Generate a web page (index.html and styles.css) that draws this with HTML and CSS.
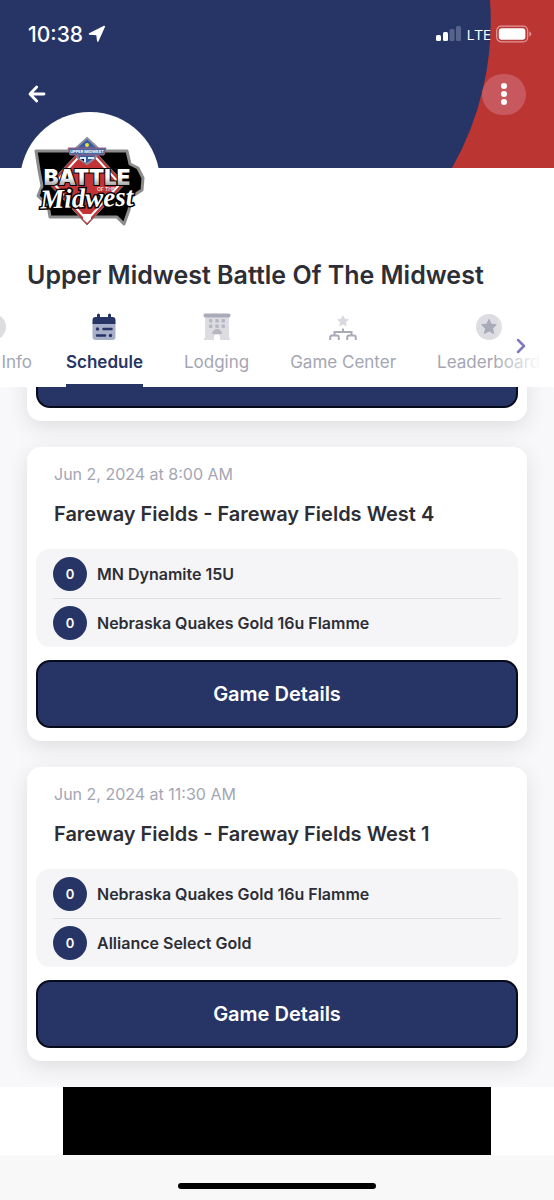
FILE: index.html
```html
<!DOCTYPE html>
<html lang="en">
<head>
<meta charset="utf-8">
<meta name="viewport" content="width=device-width, initial-scale=1">
<title>Upper Midwest Battle Of The Midwest</title>
<link rel="stylesheet" href="styles.css">
</head>
<body>
<div class="app">
  <header class="hero">
    <svg class="hero-art" viewBox="0 0 110 168" preserveAspectRatio="none" aria-hidden="true"><path d="M46 0A297 297 0 0 1 8 168H110V0Z" fill="#bb3532"/></svg>
    <div class="status">
      <div class="status-left"><span class="time">10:38</span>
        <svg width="18" height="18" viewBox="0 0 18 18" aria-hidden="true"><path d="M16.300 1.500 9.800 16 9 9.500 1.500 9Z" fill="#fff" stroke="#fff" stroke-width="1.600" stroke-linejoin="round"/></svg>
      </div>
      <div class="status-right">
        <svg width="26" height="16" viewBox="0 0 26 16" aria-hidden="true"><rect x="0" y="9" width="5" height="6" rx="1.500" fill="#fff"/><rect x="7" y="6" width="5" height="9" rx="1.500" fill="#fff"/><rect x="13.500" y="3" width="5" height="12" rx="1.500" fill="#58638b"/><rect x="20" y="0" width="5" height="15" rx="1.500" fill="#58638b"/></svg>
        <span class="network">LTE</span>
        <svg width="36" height="18" viewBox="0 0 36 18" aria-hidden="true"><rect x=".7" y="1.200" width="31" height="15.600" rx="4.500" fill="none" stroke="#dd9a99" stroke-width="1.200"/><rect x="2.800" y="3.200" width="26.600" height="11.600" rx="2.800" fill="#fff"/><path d="M33.300 6.500q2 .8 2 2.500t-2 2.500Z" fill="#dd9a99"/></svg>
      </div>
    </div>
    <div class="toolbar">
      <button class="back" type="button" aria-label="Back"><svg width="18" height="18" viewBox="0 0 18 18" aria-hidden="true"><path d="M16 9H2.500M8.700 2 2 9l6.700 7" fill="none" stroke="#fff" stroke-width="2.800" stroke-linecap="round" stroke-linejoin="round"/></svg></button>
      <button class="more" type="button" aria-label="More options"><svg width="8" height="24" viewBox="0 0 8 24" aria-hidden="true"><g fill="#fff"><circle cx="4" cy="4" r="3"/><circle cx="4" cy="12" r="3"/><circle cx="4" cy="20" r="3"/></g></svg></button>
    </div>
    <div class="avatar">
      <svg width="112" height="94" viewBox="0 0 112 94" role="img" aria-label="Battle of the Midwest">
        <defs><linearGradient id="steel" x1="0" y1="0" x2="0" y2="1"><stop offset=".5" stop-color="#fff"/><stop offset=".8" stop-color="#aaa"/></linearGradient></defs>
        <path d="M2 15H93L96 28L104 32L109 42L108 54L97 61L95 74L90 88L83 81H16L14 69L4 60L8 50L5 34Z" fill="#000" stroke="#8c8c8c" stroke-width="3" stroke-linejoin="round"/>
        <path d="M53 7 91 48 53 89 15 48Z" fill="#c23335" stroke="#777"/>
        <path d="M53 12 86 48 53 84 20 48Z" fill="none" stroke="#fff" stroke-width="2"/>
        <path d="M53 2 65 13 61 22 53 28 44 22 41 13Z" fill="#355ca7" stroke="#8d8c9e" stroke-width="2"/>
        <path d="M34 12H72L70 19H36Z" fill="#4966a1" stroke="#a6617a"/>
        <text x="53" y="17" class="logo-ribbon" text-anchor="middle">UPPER MIDWEST</text>
        <circle cx="53" cy="9" r="2" fill="#f5dc35"/><path d="M46 22h5v4M54 22h6" stroke="#dfebff" stroke-width="2"/>
        <text x="53" y="49" text-anchor="middle" class="logo-battle">BATTLE</text>
        <text x="53" y="71" text-anchor="middle" class="logo-midwest" transform="rotate(-2 53 71)">Midwest</text>
        <text x="72" y="55" text-anchor="middle" class="logo-small">OF THE</text>
        <path d="M49 78h8v5l-4 4-4-4Z" fill="#fff"/>
      </svg>
    </div>
  </header>

  <h1 class="title">Upper Midwest Battle Of The Midwest</h1>

  <nav class="tabs" aria-label="Event sections">
    <a class="tab tab-info" href="#info"><svg width="28" height="28" viewBox="0 0 28 28" aria-hidden="true"><circle cx="14" cy="14" r="13" fill="#dcdce2"/></svg><span>Info</span></a>
    <a class="tab active" href="#schedule" aria-current="page"><svg width="28" height="28" viewBox="0 0 28 28" aria-hidden="true"><path d="M2.500 10H25.500V24Q25.500 27 22.500 27H5.500Q2.500 27 2.500 24Z" fill="#a8afc8"/><path d="M2.500 11V7q0-3 3-3h17q3 0 3 3v4Z" fill="#273566"/><path d="M8.500 2v4M19.500 2v4" stroke="#273566" stroke-width="3" stroke-linecap="round"/><path d="M13.500 16h8M7 22.500h8" stroke="#273566" stroke-width="2.500" stroke-linecap="round"/><circle cx="7.500" cy="16" r="1.700" fill="#273566"/><circle cx="20.500" cy="22.500" r="1.700" fill="#273566"/></svg><span>Schedule</span></a>
    <a class="tab" href="#lodging"><svg width="28" height="28" viewBox="0 0 28 28" aria-hidden="true"><path d="M2 4H26V25h1v2H17v-2.500a3 3 0 0 0-6 0V27H1v-2h1Z" fill="#dcdce2"/><rect x=".5" y=".5" width="27" height="4" rx="1.800" fill="#a9abb8"/><g fill="#b6b7c3"><rect x="6" y="6" width="3.500" height="3.500" rx=".8"/><rect x="12.300" y="6" width="3.500" height="3.500" rx=".8"/><rect x="18.500" y="6" width="3.500" height="3.500" rx=".8"/><rect x="6" y="11.500" width="3.500" height="3.500" rx=".8"/><rect x="12.300" y="11.500" width="3.500" height="3.500" rx=".8"/><rect x="18.500" y="11.500" width="3.500" height="3.500" rx=".8"/><path d="M9 21a5 5 0 0 1 10 0Z"/></g></svg><span>Lodging</span></a>
    <a class="tab" href="#games"><svg width="28" height="28" viewBox="0 0 28 28" aria-hidden="true"><path d="m14 2 1.900 3.800 4.100.6-3 2.900.7 4.200-3.700-2-3.700 2 .7-4.200-3-2.900 4.100-.6Z" fill="#d8d9e1"/><path d="M14 15.500V19M5.500 22V19h17v3M1.200 27v-2.500q0-2 2-2h4.600q2 0 2 2V27M18.200 27v-2.500q0-2 2-2h4.600q2 0 2 2V27" fill="none" stroke="#a9abb8" stroke-width="2"/></svg><span>Game Center</span></a>
    <a class="tab" href="#leaders"><svg width="28" height="28" viewBox="0 0 28 28" aria-hidden="true"><circle cx="14" cy="14" r="13" fill="#dcdce2"/><path d="m14 6.500 2.200 4.600 5.100.7-3.700 3.500.9 5.100-4.500-2.400-4.500 2.400.9-5.100-3.700-3.500 5.100-.7Z" fill="#a9abb8" stroke="#a9abb8" stroke-linejoin="round"/></svg><span>Leaderboard</span></a>
    <button class="next" type="button" aria-label="More sections"><svg width="10" height="16" viewBox="0 0 10 16" aria-hidden="true"><path d="m2 2 6 6-6 6" fill="none" stroke="#8078bd" stroke-width="2.500" stroke-linecap="round" stroke-linejoin="round"/></svg></button>
  </nav>

  <main class="schedule">
    <article class="card card-previous"><button class="details" type="button" aria-label="Previous game details"></button></article>
    <article class="card">
      <time class="date" datetime="2024-06-02T08:00">Jun 2, 2024 at 8:00 AM</time>
      <h2 class="venue">Fareway Fields - Fareway Fields West 4</h2>
      <ul class="teams">
        <li class="team"><span class="score">0</span><span>MN Dynamite 15U</span></li>
        <li class="team"><span class="score">0</span><span>Nebraska Quakes Gold 16u Flamme</span></li>
      </ul>
      <button class="details" type="button">Game Details</button>
    </article>
    <article class="card">
      <time class="date" datetime="2024-06-02T11:30">Jun 2, 2024 at 11:30 AM</time>
      <h2 class="venue">Fareway Fields - Fareway Fields West 1</h2>
      <ul class="teams">
        <li class="team"><span class="score">0</span><span>Nebraska Quakes Gold 16u Flamme</span></li>
        <li class="team"><span class="score">0</span><span>Alliance Select Gold</span></li>
      </ul>
      <button class="details" type="button">Game Details</button>
    </article>
  </main>
  <aside class="banner" aria-label="Advertisement"><div class="banner-fill"></div></aside>
  <footer class="home"><div class="home-bar"></div></footer>
</div>
</body>
</html>
```
FILE: styles.css
```css
* { box-sizing: border-box; }
body { margin: 0; background: #fff; color: #2d2e36; font-family: Inter, "Liberation Sans", sans-serif; }
button { border: 0; padding: 0; background: none; font: inherit; cursor: pointer; }
svg { display: block; flex: none; }
h1, h2, ul { margin: 0; padding: 0; }
.app { overflow: hidden; }

.hero { position: relative; height: 168px; padding: 20px 22px 0 28px; background: #273566; color: #fff; }
.hero-art { position: absolute; top: 0; right: 0; width: 110px; height: 100%; }
.status { position: relative; display: flex; justify-content: space-between; align-items: center; height: 28px; }
.status-left, .status-right { display: flex; align-items: center; gap: 5px; }
.time { font-size: 21px; font-weight: 500; }
.network { font-family: "Open Sans", sans-serif; font-size: 15px; font-weight: 500; }
.toolbar { position: relative; display: flex; justify-content: space-between; align-items: center; margin-top: 25px; padding-right: 6px; }
.back { padding: 12px 0; }
.more { display: grid; place-items: center; width: 44px; height: 41px; border-radius: 21px; background: #c7585e; }
.avatar { position: absolute; left: 20px; top: 112px; display: flex; justify-content: center; width: 140px; height: 140px; padding-top: 24px; border-radius: 50%; background: #fff; }
.logo-battle { font: 900 22px Inter, sans-serif; fill: url(#steel); stroke: #000; stroke-width: 2px; paint-order: stroke; }
.logo-midwest { font: italic 700 27px "Liberation Serif", serif; fill: #fff; stroke: #000; stroke-width: 3px; paint-order: stroke; }
.logo-small { font: 700 5px Inter, sans-serif; fill: #ddd; }
.logo-ribbon { font: 700 4px Inter, sans-serif; fill: #fff; }

.title { padding: 91px 27px 0; font-size: 25px; line-height: 32px; font-weight: 600; }
.tabs { position: relative; display: flex; gap: 41px; height: 96px; padding-top: 22px; overflow: hidden; }
.tabs::after { content: ""; position: absolute; top: 0; right: 0; width: 60px; height: 100%; background: linear-gradient(to right, transparent, #fff 80%); }
.tab { flex: none; display: flex; flex-direction: column; align-items: center; gap: 9px; color: #a4a6b3; font-size: 17px; line-height: 24px; text-decoration: none; }
.tab-info { width: 78px; margin: 0 -7px 0 -46px; }
.tab-info span { align-self: flex-end; }
.tab.active { color: #273566; font-weight: 600; border-bottom: 3px solid #273566; }
.next { position: absolute; z-index: 1; right: 28px; top: 47px; }

.schedule { display: flex; flex-direction: column; gap: 26px; padding: 0 27px 26px; background: #f8f8fa; overflow: hidden; }
.card { padding: 16px 9px 13px; border-radius: 14px; background: #fff; box-shadow: 0 6px 20px rgba(40, 45, 60, .12); }
.card-previous { margin-top: -63px; }
.date { display: block; padding: 0 18px; color: #a4a6b3; font-size: 16px; line-height: 22px; }
.venue { margin: 16px 0 22px; padding: 0 18px; font-size: 20px; line-height: 26px; font-weight: 600; }
.teams { padding: 0 17px; border-radius: 14px; background: #f5f5f8; list-style: none; }
.team { display: flex; align-items: center; gap: 10px; height: 49px; font-size: 16px; font-weight: 600; }
.team + .team { border-top: 1px solid #dedee2; }
.score { display: grid; place-items: center; width: 34px; height: 34px; border-radius: 50%; background: #273566; color: #fff; font-size: 13px; }
.details { display: block; width: 100%; height: 68px; margin-top: 13px; border: 2px solid #080b1c; border-radius: 14px; background: #273566; color: #fff; font-size: 20px; font-weight: 600; }
.card-previous .details { margin-top: 0; }

.banner { padding: 0 63px; background: #fff; }
.banner-fill { height: 68px; background: #000; }
.home { display: flex; justify-content: center; padding: 28px 0 11px; background: #f8f8f8; }
.home-bar { width: 198px; height: 6px; border-radius: 3px; background: #000; }
```
